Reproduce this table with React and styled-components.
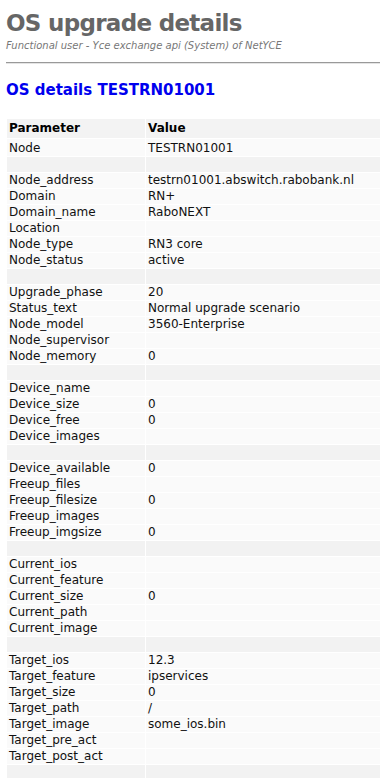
import React from "react";
import styled, { createGlobalStyle } from "styled-components";

const GlobalStyle = createGlobalStyle`
  html, body {
    margin: 0;
    padding: 0;
    background: #fff;
    font-family: "DejaVu Sans", Verdana, sans-serif;
    overflow: hidden;
  }
`;

const Page = styled.div`
  padding: 0 0 0 6px;
`;

const Title = styled.h1`
  margin: 0;
  padding-top: 9px;
  font-size: 23px;
  line-height: 28px;
  letter-spacing: -0.7px;
  font-weight: bold;
  color: #666;
`;

const Subtitle = styled.div`
  margin-top: 2px;
  font-size: 10px;
  line-height: 13px;
  font-style: italic;
  color: #777;
`;

const Rule = styled.hr`
  margin: 10px 0 0;
  border: 0;
  border-top: 1px solid #999;
  border-bottom: 1px solid #e4e4e4;
`;

const Heading = styled.h2`
  margin: 17px 0 0;
  font-size: 15px;
  line-height: 18px;
  font-weight: bold;
  color: #0000ee;
`;

const Table = styled.table`
  margin: 19px 0 0;
  width: calc(100% + 4px);
  border-collapse: separate;
  border-spacing: 1px;
  font-size: 12px;
  color: #111;
`;

const HeadCell = styled.th`
  height: 19px;
  padding: 0 2px;
  line-height: 19px;
  text-align: left;
  font-weight: bold;
  color: #000;
  background: #f3f3f3;
  width: ${(p) => p.$w || "auto"};
`;

const Cell = styled.td`
  height: ${(p) => (p.$tall ? "17px" : "15px")};
  padding: ${(p) => (p.$tall ? "1px 2px 0" : "0 2px")};
  box-sizing: border-box;
  line-height: 15px;
  white-space: nowrap;
  background: ${(p) => (p.$sep ? "#f2f2f2" : "#fafafa")};
`;

const groups = [
  [["Node", "TESTRN01001"]],
  [
    ["Node_address", "testrn01001.abswitch.rabobank.nl"],
    ["Domain", "RN+"],
    ["Domain_name", "RaboNEXT"],
    ["Location", ""],
    ["Node_type", "RN3 core"],
    ["Node_status", "active"],
  ],
  [
    ["Upgrade_phase", "20"],
    ["Status_text", "Normal upgrade scenario"],
    ["Node_model", "3560-Enterprise"],
    ["Node_supervisor", ""],
    ["Node_memory", "0"],
  ],
  [
    ["Device_name", ""],
    ["Device_size", "0"],
    ["Device_free", "0"],
    ["Device_images", ""],
  ],
  [
    ["Device_available", "0"],
    ["Freeup_files", ""],
    ["Freeup_filesize", "0"],
    ["Freeup_images", ""],
    ["Freeup_imgsize", "0"],
  ],
  [
    ["Current_ios", ""],
    ["Current_feature", ""],
    ["Current_size", "0"],
    ["Current_path", ""],
    ["Current_image", ""],
  ],
  [
    ["Target_ios", "12.3"],
    ["Target_feature", "ipservices"],
    ["Target_size", "0"],
    ["Target_path", "/"],
    ["Target_image", "some_ios.bin"],
    ["Target_pre_act", ""],
    ["Target_post_act", ""],
  ],
];

const App = () => (
  <Page>
    <GlobalStyle />
    <Title>OS upgrade details</Title>
    <Subtitle>Functional user - Yce exchange api (System) of NetYCE</Subtitle>
    <Rule />
    <Heading>OS details TESTRN01001</Heading>
    <Table>
      <thead>
        <tr>
          <HeadCell $w="134px">Parameter</HeadCell>
          <HeadCell>Value</HeadCell>
        </tr>
      </thead>
      <tbody>
        {groups.map((rows, gi) => (
          <React.Fragment key={gi}>
            {rows.map(([name, value]) => (
              <tr key={name}>
                <Cell $tall={gi === 0}>{name}</Cell>
                <Cell $tall={gi === 0}>{value}</Cell>
              </tr>
            ))}
            <tr>
              <Cell $sep />
              <Cell $sep />
            </tr>
          </React.Fragment>
        ))}
      </tbody>
    </Table>
  </Page>
);

export default App;
